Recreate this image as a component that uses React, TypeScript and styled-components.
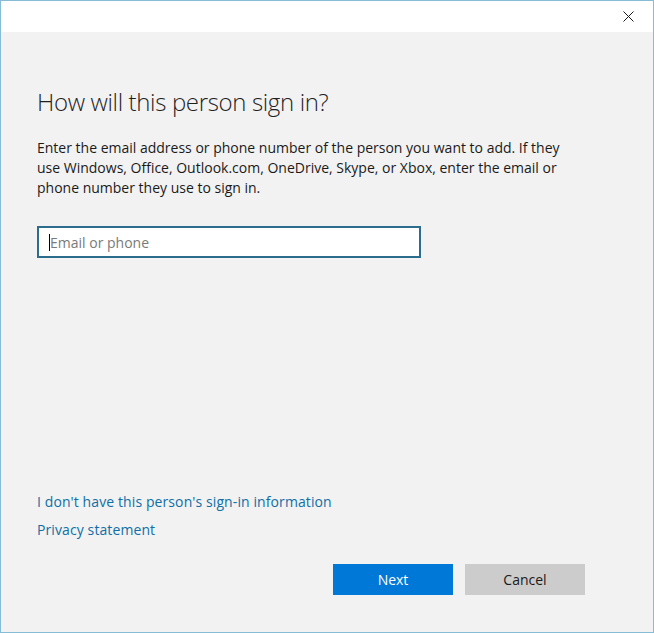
import React from "react";
import styled, { createGlobalStyle } from "styled-components";

const Global = createGlobalStyle`
  html, body { margin: 0; padding: 0; background: #f2f2f2; }
  body { font-family: "Open Sans", "Noto Sans", sans-serif; }
  * { box-sizing: border-box; }
`;

const Window = styled.div`
  width: 654px;
  height: 633px;
  border: 1px solid #86bcd6;
  background: #f2f2f2;
  display: flex;
  flex-direction: column;
`;

const TitleBar = styled.div`
  height: 31px;
  background: #ffffff;
  display: flex;
  justify-content: flex-end;
  align-items: center;
  padding-right: 18px;
  flex-shrink: 0;
`;

const CloseButton = styled.button`
  width: 14px;
  height: 14px;
  padding: 0;
  border: none;
  background: transparent;
  display: flex;
  align-items: center;
  justify-content: center;
  color: #1a1a1a;
`;

const Body = styled.div`
  flex: 1;
  display: flex;
  flex-direction: column;
  padding: 0 36px 37px 36px;
`;

const Heading = styled.h1`
  margin: 54px 0 0 0;
  font-family: "Open Sans", "Noto Sans", sans-serif;
  font-weight: 300;
  font-size: 24px;
  line-height: 32px;
  color: #1f1f1f;
  letter-spacing: -0.35px;
`;

const Description = styled.p`
  margin: 20px 0 0 0;
  font-size: 14px;
  line-height: 20px;
  color: #1a1a1a;
  width: 545px;
  letter-spacing: 0;
`;

const Field = styled.div`
  margin-top: 28px;
  width: 384px;
  height: 32px;
  border: 2px solid #2c6c8c;
  background: #ffffff;
  display: flex;
  align-items: center;
  padding-left: 10px;
`;

const Input = styled.input`
  border: none;
  outline: none;
  background: transparent;
  flex: 1;
  font-family: "Open Sans", "Noto Sans", sans-serif;
  font-size: 14px;
  color: #1a1a1a;
  padding: 0;
  caret-color: #000;
  &::placeholder { color: #7a7a7a; }
`;

const Caret = styled.span`
  width: 1px;
  height: 17px;
  background: #000;
  flex-shrink: 0;
`;

const Links = styled.div`
  margin-top: auto;
  display: flex;
  flex-direction: column;
  gap: 8px;
`;

const Link = styled.a`
  font-size: 14px;
  line-height: 20px;
  color: #0f6fa6;
  text-decoration: none;
  cursor: pointer;
  width: fit-content;
  letter-spacing: 0.1px;
`;

const Buttons = styled.div`
  margin-top: 24px;
  display: flex;
  justify-content: flex-end;
  gap: 12px;
  padding-right: 32px;
`;

const Button = styled.button<{ $primary?: boolean }>`
  width: 120px;
  height: 31px;
  border: none;
  font-family: "Open Sans", "Noto Sans", sans-serif;
  font-size: 14px;
  color: ${(p) => (p.$primary ? "#ffffff" : "#1a1a1a")};
  background: ${(p) => (p.$primary ? "#0078d7" : "#cccccc")};
  cursor: pointer;
`;

export default function App() {
  return (
    <>
      <Global />
      <Window>
        <TitleBar>
          <CloseButton aria-label="Close">
            <svg width="11" height="11" viewBox="0 0 11 11">
              <path d="M0.5 0.5 L10.5 10.5 M10.5 0.5 L0.5 10.5" stroke="#1a1a1a" strokeWidth="1" />
            </svg>
          </CloseButton>
        </TitleBar>
        <Body>
          <Heading>How will this person sign in?</Heading>
          <Description>
            Enter the email address or phone number of the person you want to add. If they
            use Windows, Office, Outlook.com, OneDrive, Skype, or Xbox, enter the email or
            phone number they use to sign in.
          </Description>
          <Field>
            <Caret />
            <Input placeholder="Email or phone" />
          </Field>
          <Links>
            <Link>I don't have this person's sign-in information</Link>
            <Link>Privacy statement</Link>
          </Links>
          <Buttons>
            <Button $primary>Next</Button>
            <Button>Cancel</Button>
          </Buttons>
        </Body>
      </Window>
    </>
  );
}
